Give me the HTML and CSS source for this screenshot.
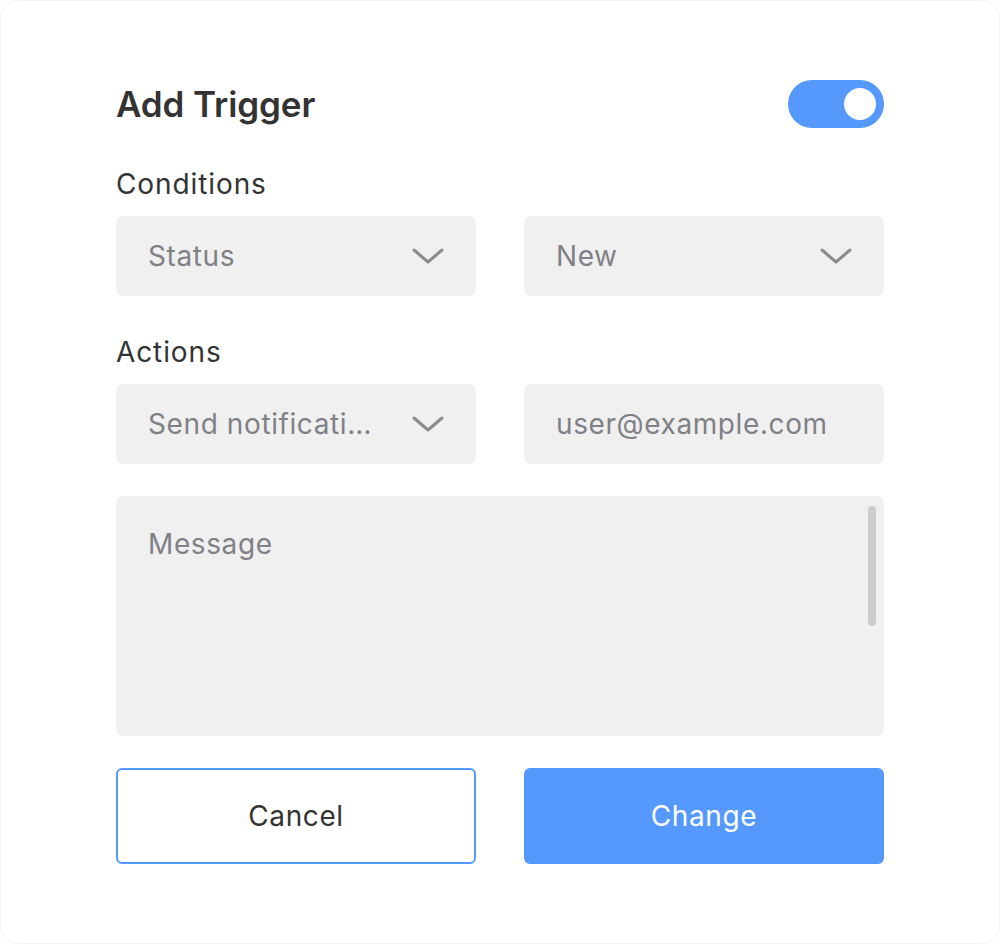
FILE: index.html
```html
<!DOCTYPE html>
<html>
<head>
<meta charset="utf-8">
<link rel="stylesheet" href="styles.css">
</head>
<body>
<div class="card">
  <div class="header">
    <h1 class="title">Add Trigger</h1>
    <div class="toggle"><span class="knob"></span></div>
  </div>
  <div class="label">Conditions</div>
  <div class="row">
    <div class="field select"><span class="text">Status</span><svg class="chev" viewBox="0 0 32 32" width="32" height="32"><path d="M2 10 L16 22 L30 10" fill="none" stroke="#8a8a8f" stroke-width="3" stroke-linecap="round" stroke-linejoin="round"/></svg></div>
    <div class="field select"><span class="text">New</span><svg class="chev" viewBox="0 0 32 32" width="32" height="32"><path d="M2 10 L16 22 L30 10" fill="none" stroke="#8a8a8f" stroke-width="3" stroke-linecap="round" stroke-linejoin="round"/></svg></div>
  </div>
  <div class="label label-gap">Actions</div>
  <div class="row">
    <div class="field select"><span class="text">Send notificati…</span><svg class="chev" viewBox="0 0 32 32" width="32" height="32"><path d="M2 10 L16 22 L30 10" fill="none" stroke="#8a8a8f" stroke-width="3" stroke-linecap="round" stroke-linejoin="round"/></svg></div>
    <div class="field"><span class="text">user@example.com</span></div>
  </div>
  <div class="textarea">
    <span class="text">Message</span>
    <span class="scrollbar"></span>
  </div>
  <div class="row buttons">
    <div class="btn btn-cancel">Cancel</div>
    <div class="btn btn-change">Change</div>
  </div>
</div>
</body>
</html>
```
FILE: styles.css
```css
* { box-sizing: border-box; }
html, body { margin: 0; padding: 0; background: #fff; }
body { font-family: Inter, "Noto Sans", sans-serif; }
.card {
  width: 1000px;
  height: 944px;
  border: 1px solid #f3f3f3;
  border-radius: 18px;
  background: #fff;
  padding: 79px 115px;
}
.header {
  display: flex;
  justify-content: space-between;
  align-items: center;
  height: 48px;
}
.title {
  margin: 0;
  font-size: 35px;
  font-weight: 600;
  color: #333;
  letter-spacing: -0.1px;
}
.toggle {
  width: 96px;
  height: 48px;
  border-radius: 24px;
  background: #5599ff;
  display: flex;
  align-items: center;
  justify-content: flex-end;
  padding-right: 8px;
}
.knob {
  width: 32px;
  height: 32px;
  border-radius: 50%;
  background: #fff;
}
.label {
  margin-top: 40px;
  height: 32px;
  line-height: 32px;
  font-size: 28px;
  letter-spacing: 0.9px;
  color: #333;
  margin-bottom: 16px;
}
.row {
  display: grid;
  grid-template-columns: 360px 360px;
  gap: 48px;
}
.field {
  height: 80px;
  background: #f0f0f0;
  border-radius: 6px;
  padding: 0 32px;
  display: flex;
  align-items: center;
  justify-content: space-between;
}
.text {
  font-size: 28px;
  letter-spacing: 0.6px;
  color: #808087;
  white-space: nowrap;
}
.chev { display: block; flex: none; }
.textarea {
  margin-top: 32px;
  height: 240px;
  background: #f0f0f0;
  border-radius: 6px;
  padding: 31px 32px;
  position: relative;
}
.scrollbar {
  position: absolute;
  right: 8px;
  top: 10px;
  width: 8px;
  height: 120px;
  border-radius: 4px;
  background: #cccccc;
}
.buttons { margin-top: 32px; }
.btn {
  height: 96px;
  border-radius: 6px;
  display: flex;
  align-items: center;
  justify-content: center;
  font-size: 28px;
  letter-spacing: 0.6px;
}
.btn-cancel {
  border: 2px solid #5599ff;
  color: #333;
  background: #fff;
}
.btn-change {
  background: #5599ff;
  color: #fff;
}
```
